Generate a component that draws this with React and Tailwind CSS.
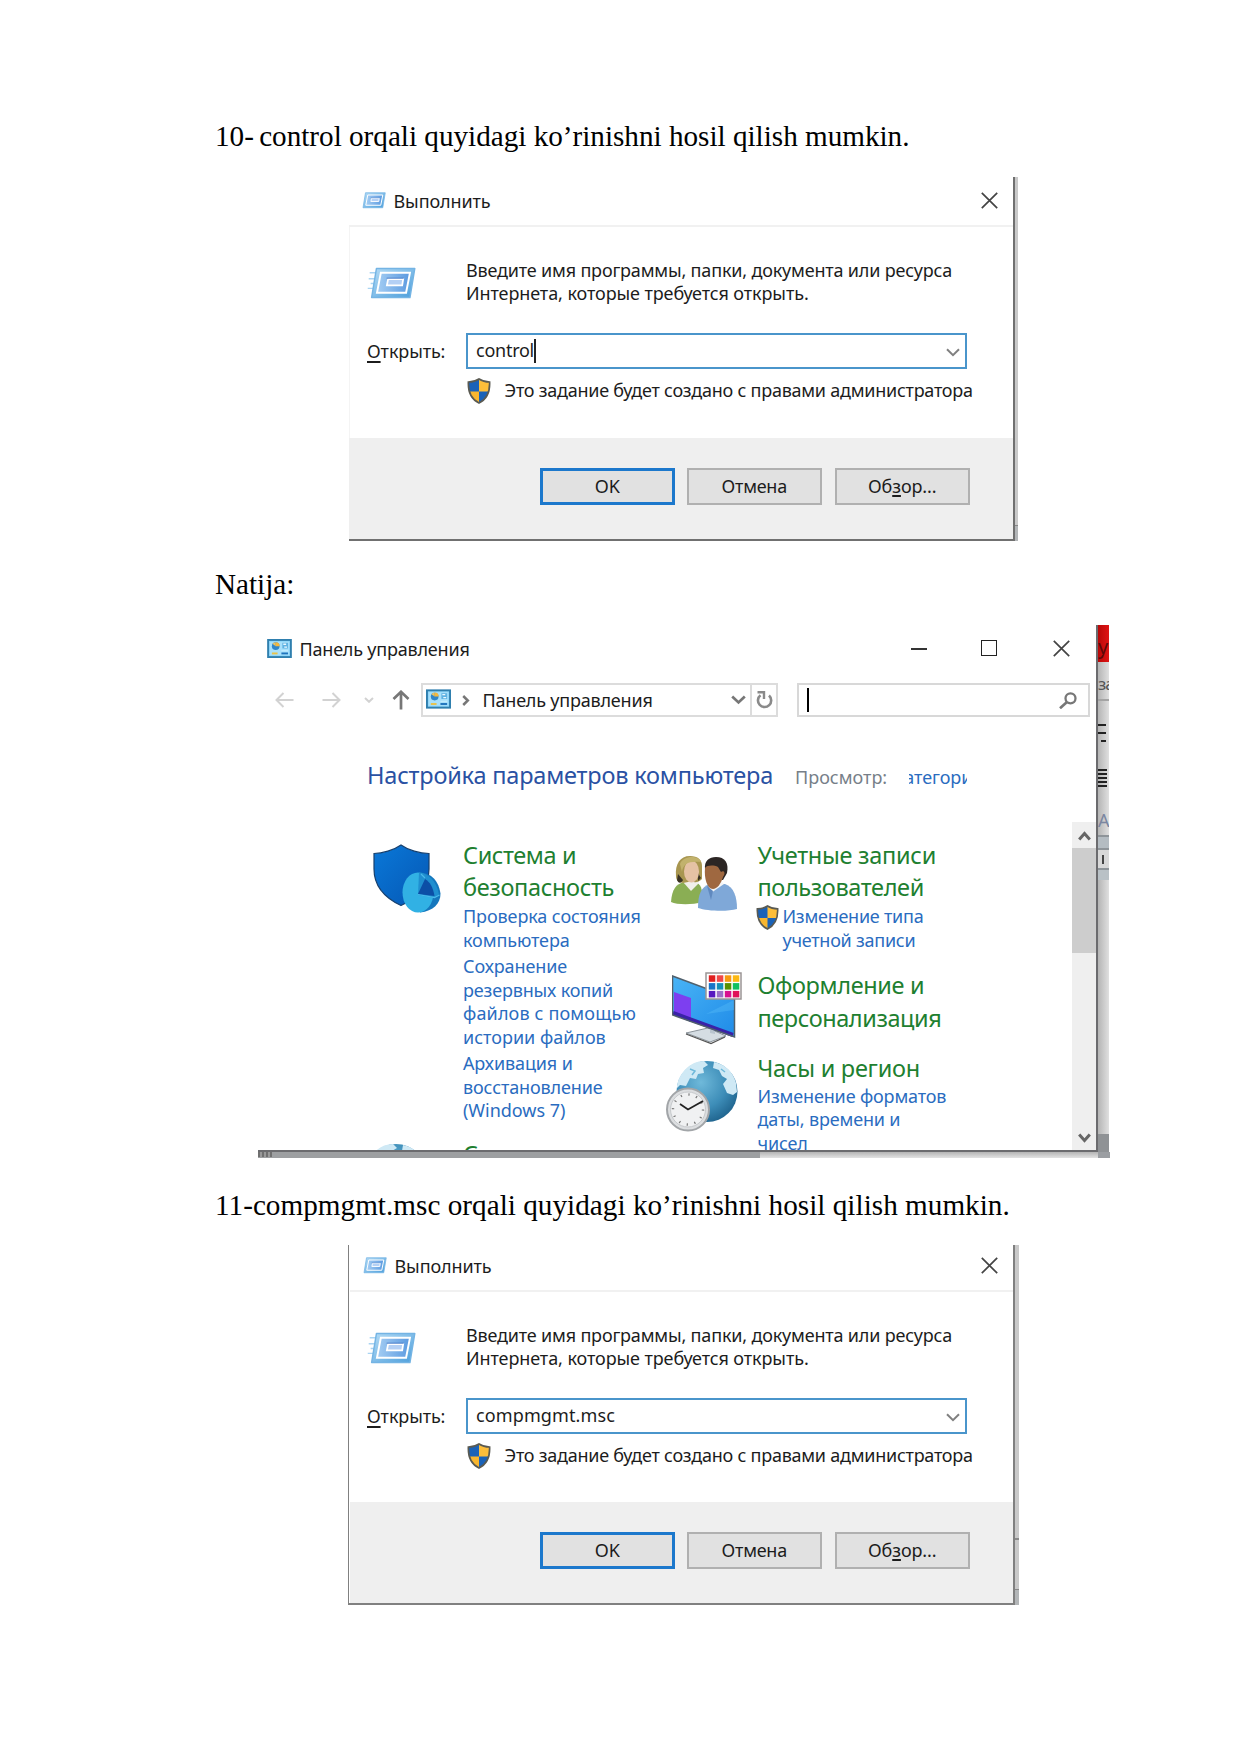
const serif = "h-[34px] pl-[215px] font-['Liberation_Serif',serif] text-[29.17px] leading-[34px] whitespace-pre text-black";

function UacShield({ className }) {
  return (
    <svg viewBox="0 0 24 26" className={className}>
      <path d="M12 1C9 3 5 4 1.4 4 1 13 3.500 21 12 25 20.500 21 23 13 22.600 4 19 4 15 3 12 1Z" fill="#1a62b8" />
      <path d="M12 1c3 2 7 3 10.600 3 .2 3.500 0 6.500-1 9.500H12Z" fill="#fdbe3a" />
      <path d="M2.300 13.500H12V25C6.500 22.500 3.500 18.500 2.300 13.500Z" fill="#f8b62f" />
      <path d="M12 1C9 3 5 4 1.400 4 1 13 3.500 21 12 25 20.500 21 23 13 22.600 4 19 4 15 3 12 1Z" fill="none" stroke="#5a5a52" strokeWidth="1.700" />
    </svg>
  );
}

function RunIcon({ className, lines }) {
  return (
    <svg viewBox="0 0 50 34" className={className}>
      <defs>
        <linearGradient id="run" x1="0" y1="0" x2="1" y2="1">
          <stop offset="0" stopColor="#b4dcf6" />
          <stop offset="1" stopColor="#4c9edb" />
        </linearGradient>
        <linearGradient id="runin" x1="0" y1="0" x2="1" y2="0">
          <stop offset="0" stopColor="#a4cdf3" />
          <stop offset="1" stopColor="#5b9ae0" />
        </linearGradient>
      </defs>
      {lines && (
        <path d="M2 6h8M1 12h7M3 17h5M0 22h6" stroke="#a9d4f2" strokeWidth="1.500" fill="none" />
      )}
      <path d="M9 1.500h39.500L43.500 31.500H4Z" fill="url(#run)" stroke="#74b4e4" strokeWidth="1.500" strokeLinejoin="round" />
      <path d="M13.500 6h30L39.500 26.500H9.500Z" fill="url(#runin)" stroke="#fff" strokeWidth="2" />
      <path d="M21 12.500h15.500l-1 6.500H19.700Z" fill="#b4d0f5" stroke="#fff" strokeWidth="1.800" />
      <path d="M19.500 11.500h17.500" stroke="#4a7cc8" strokeWidth="1" />
    </svg>
  );
}

function CloseGlyph({ className }) {
  return (
    <svg viewBox="0 0 17 17" className={className}>
      <path d="M.8.8l15.400 15.400M16.200.8L.8 16.200" stroke="#444" strokeWidth="1.700" fill="none" />
    </svg>
  );
}

function RunDialog({ value, caret, second }) {
  return (
    <div className={second ? "ml-[348px] flex h-[360px] w-[671px]" : "ml-[349px] flex h-[364px] w-[669px]"}>
      <div
        className={
          second
            ? "flex w-[667px] flex-col border-r-2 border-b-2 border-l border-[#808080] pl-px"
            : "flex w-[666px] flex-col border-r-2 border-b-2 border-[#707070]"
        }
      >
        <div
          className={
            second
              ? "flex h-[47px] shrink-0 items-start border-b-2 border-[#f1f1f1] pt-[9px] pl-[12px]"
              : "flex h-[50px] shrink-0 items-start border-b-2 border-[#f1f1f1] pt-[12px] pl-[12px]"
          }
        >
          <RunIcon className="mt-[2.500px] h-[17px] w-[25px]" />
          <span className="ml-[7.500px] leading-6 tracking-[-0.1px]">Выполнить</span>
          <CloseGlyph className="mt-[2.500px] mr-[15px] ml-auto size-[17px]" />
        </div>
        <div className={second ? "h-[210px] shrink-0" : "h-[211px] shrink-0 border-l border-[#f4f4f4]"}>
          <div className="flex pt-[31.500px]">
            <div className="w-[116px] pl-[17px]">
              <RunIcon lines className="mt-[8px] h-[33px] w-[50px]" />
            </div>
            <div className="leading-[23.600px] whitespace-nowrap">
              <div className="tracking-[-0.18px]">Введите имя программы, папки, документа или ресурса</div>
              <div className="tracking-[-0.09px]">Интернета, которые требуется открыть.</div>
            </div>
          </div>
          <div className="mt-[27.500px] flex">
            <div className="w-[116px] pt-[6px] pl-[17px] leading-6 tracking-[-0.1px]">
              <span className="underline decoration-[1.500px] underline-offset-[3px]">О</span>ткрыть:
            </div>
            <div className="flex h-[36px] w-[501px] border-2 border-[#4a95cb] pt-[2.500px] pl-[8px] leading-6">
              <span className={second ? "tracking-[0.12px]" : "tracking-[-0.25px]"}>{value}</span>
              {caret && <span className="mt-px h-[24px] w-[2px] bg-[#222]" />}
              <svg viewBox="0 0 14 9" className="mt-[10.500px] mr-[5.500px] ml-auto h-[9px] w-[14px]">
                <path d="M1 1.200l6 6 6-6" fill="none" stroke="#808080" strokeWidth="2" />
              </svg>
            </div>
          </div>
          <div className="mt-[9px] flex pl-[116.500px] leading-6 whitespace-nowrap">
            <UacShield className="mt-[-0.500px] h-[26px] w-[24px]" />
            <span className="ml-[14px] tracking-[-0.25px]">Это задание будет создано с правами администратора</span>
          </div>
        </div>
        <div className="flex min-h-0 grow justify-end bg-[#efefef] pt-[30px] pr-[43.500px] text-[18px]">
          <button className="h-[37px] w-[134.500px] border-3 border-[#1c78cc] bg-[#e1e1e1]">OK</button>
          <button className="ml-[12.500px] h-[37px] w-[134.500px] border-2 border-[#b0b0b0] bg-[#e1e1e1] tracking-[-0.25px]">Отмена</button>
          <button className="ml-[13.500px] h-[37px] w-[134.500px] border-2 border-[#b0b0b0] bg-[#e1e1e1] tracking-[-0.1px]">
            Об<span className="underline decoration-[1.500px] underline-offset-[2px]">з</span>ор...
          </button>
        </div>
      </div>
      <div className="flex grow flex-col bg-[#c9c9c9]">
        <div className={second ? "mt-[293px] h-[2px] bg-[#8a8a8a]" : "hidden"} />
        <div className="mt-auto h-[16px] border-t border-[#888] bg-[#b3b6b8]" />
      </div>
    </div>
  );
}

function PanelIcon({ className }) {
  return (
    <svg viewBox="0 0 26 20" className={className}>
      <rect x="1" y="1" width="24" height="18" fill="#8fd6fa" stroke="#2f7fae" strokeWidth="2" />
      <rect x="3" y="3" width="20" height="14" fill="#a8e0fb" />
      <circle cx="9" cy="7.500" r="4" fill="#2f86c9" />
      <path d="M9 7.500V3.300a4.200 4.200 0 0 1 4.200 4.200Z" fill="#f5b73a" />
      <path d="M9 7.500L5.600 5A4.200 4.200 0 0 1 9 3.300Z" fill="#f0c35a" />
      <rect x="16" y="4" width="6" height="6" fill="#5fb2e2" />
      <path d="M17 5.500h3M18 8.500h3" stroke="#eaf8ff" strokeWidth="1.400" />
      <path d="M5 15.200h6" stroke="#e8c24a" strokeWidth="2" />
      <path d="M15 15.200h7" stroke="#1f74bd" strokeWidth="2" />
      <path d="M15 12.400h7" stroke="#c9efff" strokeWidth="1" />
    </svg>
  );
}

function SecurityIcon() {
  return (
    <svg viewBox="0 0 68 70" className="mt-[22px] ml-[5px] h-[70px] w-[68px]">
      <defs>
        <linearGradient id="sec" x1="0" y1="0" x2="1" y2="1">
          <stop offset="0" stopColor="#0a78d8" />
          <stop offset="1" stopColor="#0557b4" />
        </linearGradient>
      </defs>
      <path d="M28 1C21 6 9 9.500 1 9.500V25C1 42 12 54 28 61.500 44 54 56 42 56 25V9.500C47 9.500 35 6 28 1Z" fill="url(#sec)" stroke="#17406e" strokeWidth="1.200" />
      <path d="M46 28.500c9 0 19 5 21.500 21 0 10-7 17.500-20.500 19Z" fill="#1577bd" />
      <ellipse cx="45" cy="48.500" rx="15.500" ry="20" fill="#31b1e4" />
      <path d="M46 28.500c9 1 17 7 20 22L61 54 45 51Z" fill="#1f8fd0" />
      <path d="M45 50l7-15c5 3 8 8 9.500 17Z" fill="#0c4fa6" />
      <path d="M45 50.500l16.500 3 5-2.500M52 34l-4-4" fill="none" stroke="#49b9ea" strokeWidth="1.200" />
    </svg>
  );
}

function PeopleIcon() {
  return (
    <svg viewBox="0 0 67 55" className="mt-[34px] ml-[8px] h-[55px] w-[67px]">
      <path d="M0 46C1 33 5 28 13 26l13 1c5 2 6 10 5 19C22 49 6 49 0 46Z" fill="#8aae54" />
      <path d="M12 26l8 9 8-8-4-5Z" fill="#f1f0ea" />
      <path d="M5 20C4 8 9 0 19 0c8 0 12 4 12 10v13c-4 4-8 4-9 2L12 27C7 26 5 24 5 20Z" fill="#a89650" />
      <path d="M12 24c-2 4-5 3-6 0l1-6Z" fill="#3a3324" />
      <path d="M27 17l3 5-3 3Z" fill="#3a3324" />
      <ellipse cx="20.500" cy="15.500" rx="7.500" ry="11" fill="#e5c2a4" />
      <path d="M11 16c1-8 6-11 19-10C28-1 12-1 9 8Z" fill="#c2b26c" />
      <path d="M27 52c0-14 3-21 12-24h15c9 3 12 13 12 25-10 3-30 2-39-1Z" fill="#7fa8d8" />
      <path d="M37 28l3 9 13-9-5-5Z" fill="#f4f5f6" />
      <path d="M36 30l4 14 2-9Z" fill="#6089bf" />
      <path d="M34 13C33 5 38 1 45 1c9 0 13 6 11 16l-4 7H36Z" fill="#2c2624" />
      <path d="M34 12c2-3 9-3 13-1l3 5c3-2 5 1 2 5-2 7-6 12-10 12-6 0-9-11-8-21Z" fill="#9f6840" />
    </svg>
  );
}

const swatches = [
  ["#e02020", "#f04848", "#f79a10", "#fcb813"],
  ["#1874c8", "#1690b8", "#589000", "#10c060"],
  ["#5818c0", "#9c70c8", "#d81090", "#e01058"],
];

function MonitorIcon() {
  return (
    <svg viewBox="0 0 70 73" className="ml-[9px] h-[73px] w-[70px]">
      <defs>
        <linearGradient id="scr" x1="0" y1="0" x2="1" y2="1">
          <stop offset="0" stopColor="#49b4f6" />
          <stop offset="1" stopColor="#1f8be8" />
        </linearGradient>
      </defs>
      <path d="M14 61l22-5 18 8-16 6Z" fill="#d5dde3" stroke="#8b949b" strokeWidth="1" />
      <path d="M14 62l25 9.500 14-6.500" fill="none" stroke="#555" strokeWidth="1.300" />
      <path d="M38 50h5v12l-5-1Z" fill="#b9c5cf" />
      <path d="M.5 4l62 23v38L.500 42.500Z" fill="url(#scr)" />
      <path d="M2 20l17 6v24L2 43Z" fill="#7d3ff0" />
      <path d="M1 41l60 22" stroke="#3a22a8" strokeWidth="4" />
      <path d="M.5 4l62 23v38L.500 43Z" fill="none" stroke="#51606c" strokeWidth="1.500" />
      <path d="M34 42L62 28v10Z" fill="#5cc0fa" opacity=".35" />
      <rect x="34" y="1" width="35" height="26" fill="#fff" stroke="#9b9595" strokeWidth="1.500" />
      {swatches.map((row, r) =>
        row.map((c, i) => <rect key={c} x={36.800 + i * 8} y={3.300 + r * 7.800} width="6.500" height="6.500" fill={c} />)
      )}
    </svg>
  );
}

function Globe({ id }) {
  return (
    <>
      <defs>
        <radialGradient id={id} cx="0.400" cy="0.350" r="0.700">
          <stop offset="0" stopColor="#6fb9da" />
          <stop offset="0.600" stopColor="#3d8db8" />
          <stop offset="1" stopColor="#1e628c" />
        </radialGradient>
      </defs>
      <circle cx="41" cy="31.500" r="30.500" fill={`url(#${id})`} />
      <path d="M11 26C13 13 24 1 38 1l4 4-5 3 1 5-6 1-2 5-6-1-4 8-6-1-3 3ZM48 2c10 2 19 9 22 21l1 9-4 3-6-2-4-9 4-5-5-3-3-6-6-2Z" fill="#cfe9f5" />
      <path d="M24 9l5 2-3 4M55 9l4 3" fill="none" stroke="#6fb9da" strokeWidth="1.500" />
    </>
  );
}

function ClockIcon() {
  return (
    <svg viewBox="0 0 72 73" className="ml-[3px] h-[73px] w-[72px]">
      <Globe id="globe" />
      <circle cx="22" cy="49.500" r="21" fill="#dcdee0" stroke="#a2a5a8" strokeWidth="2" />
      <circle cx="22" cy="49.500" r="17.500" fill="#f0f1f2" stroke="#c6c9cc" strokeWidth="1" />
      <circle cx="22" cy="49.500" r="15" fill="none" stroke="#777" strokeWidth="2.400" strokeDasharray="1.200 6.654" />
      <path d="M14 44l8 5.500L37 41" fill="none" stroke="#222" strokeWidth="1.800" />
    </svg>
  );
}

const catTitle = "text-[23.500px] leading-[32.800px] text-[#1e8030]";
const link = "leading-[23.600px] text-[#2a6cc0]";

function ControlPanel() {
  return (
    <div className="ml-[258px] h-[533px] w-[851px]">
      <div className="flex h-[527px]">
        <div className="flex w-[841px] flex-col border-r-2 border-b-2 border-[#6b6b6e]">
          <div className="flex h-[36px] items-start pt-[12px] pl-[9px]">
            <PanelIcon className="mt-[2px] h-[19px] w-[25px]" />
            <span className="ml-[7.500px] leading-6 tracking-[-0.2px]">Панель управления</span>
            <span className="mt-[11px] ml-auto h-[2px] w-[16px] bg-[#333]" />
            <span className="mt-[3px] ml-[54px] size-[16px] border-[1.500px] border-[#222]" />
            <CloseGlyph className="mt-[2.500px] mr-[26.500px] ml-[55.500px] size-[17px]" />
          </div>
          <div className="mt-[22px] flex h-[34px] shrink-0 items-center pl-[17px]">
            <svg viewBox="0 0 19 16" className="h-[16px] w-[19px]">
              <path d="M8.500 1L1.500 8l7 7M1.500 8H18.500" fill="none" stroke="#d2d2d2" strokeWidth="2" />
            </svg>
            <svg viewBox="0 0 19 16" className="ml-[27.500px] h-[16px] w-[19px]">
              <path d="M10.500 1l7 7-7 7M17.500 8H.5" fill="none" stroke="#d2d2d2" strokeWidth="2" />
            </svg>
            <svg viewBox="0 0 10 6" className="ml-[23px] h-[6px] w-[10px]">
              <path d="M1 1l4 3.800L9 1" fill="none" stroke="#d2d2d2" strokeWidth="2" />
            </svg>
            <svg viewBox="0 0 18 20" className="ml-[18px] h-[20px] w-[18px]">
              <path d="M1.500 9L9 1.800 16.500 9M9 2v17.500" fill="none" stroke="#777" strokeWidth="2.700" />
            </svg>
            <div className="ml-[11.500px] flex h-[34px] w-[356.500px] items-center border-2 border-[#dcdcdc] pl-[3px]">
              <PanelIcon className="-mt-[3px] h-[20px] w-[25px]" />
              <svg viewBox="0 0 8 11" className="ml-[10.500px] h-[11px] w-[8px]">
                <path d="M1.200 1l4.600 4.500-4.600 4.500" fill="none" stroke="#777" strokeWidth="2.500" />
              </svg>
              <span className="ml-[13px] leading-6 tracking-[-0.2px]">Панель управления</span>
              <svg viewBox="0 0 15 10" className="mr-[4px] ml-auto h-[10px] w-[15px]">
                <path d="M1.200 1.500l6.300 6 6.300-6" fill="none" stroke="#777" strokeWidth="2.700" />
              </svg>
              <div className="flex h-full w-[26px] items-center justify-center border-l-2 border-[#dcdcdc]">
                <svg viewBox="0 0 17 18" className="ml-[2px] h-[18px] w-[17px]">
                  <path d="M13 4.500A6.600 6.600 0 1 1 4.500 4.200" fill="none" stroke="#8a8a8a" strokeWidth="2.600" />
                  <path d="M1.500 1.300h6.500V8" fill="none" stroke="#8a8a8a" strokeWidth="2.400" />
                </svg>
              </div>
            </div>
            <div className="ml-[19.500px] flex h-[34px] w-[293px] items-center border-2 border-[#d8d8d8] pl-[7.500px]">
              <span className="h-[24px] w-[2px] bg-black" />
              <svg viewBox="0 0 18 17" className="mr-[11.500px] ml-auto h-[17px] w-[18px]">
                <circle cx="11.500" cy="6.300" r="5" fill="none" stroke="#777" strokeWidth="2.300" />
                <path d="M8 10L1 16.300" stroke="#777" strokeWidth="2.600" />
              </svg>
            </div>
          </div>
          <div className="mt-[42px] flex h-[33px] shrink-0 pl-[109px] leading-[33px] whitespace-nowrap">
            <span className="w-[428px] text-[23.500px] tracking-[-0.18px] text-[#2a51a3]">Настройка параметров компьютера</span>
            <span className="mt-[1.500px] w-[114px] text-[#777f89]">Просмотр:</span>
            <div className="mt-[1.500px] flex w-[58px] justify-center overflow-hidden text-[#2a6cc0]">
              <span className="tracking-[-0.05px]">Категория</span>
            </div>
          </div>
          <div className="mt-[29.500px] flex min-h-0 grow">
            <div className="flex w-[814px] overflow-hidden pl-[110px] whitespace-nowrap">
              <div className="w-[95px] shrink-0">
                <SecurityIcon />
                <svg viewBox="0 0 72 40" className="mt-[229px] ml-[-13px] h-[40px] w-[72px]">
                  <Globe id="globe2" />
                </svg>
              </div>
              <div className="w-[200px] shrink-0 pt-[17px]">
                <div className={catTitle}>
                  <div className="tracking-[-0.4px]">Система и</div>
                  <div className="tracking-[-0.33px]">безопасность</div>
                </div>
                <div className={`${link} mt-px tracking-[-0.1px]`}>
                  <div>Проверка состояния</div>
                  <div>компьютера</div>
                </div>
                <div className={`${link} mt-[2.800px]`}>
                  <div className="tracking-[-0.1px]">Сохранение</div>
                  <div className="tracking-[-0.16px]">резервных копий</div>
                  <div className="tracking-[0.15px]">файлов с помощью</div>
                  <div>истории файлов</div>
                </div>
                <div className={`${link} mt-[2.800px] tracking-[-0.12px]`}>
                  <div>Архивация и</div>
                  <div>восстановление</div>
                  <div className="tracking-[-0.03px]">(Windows 7)</div>
                </div>
                <div className={`${catTitle} mt-[14.500px]`}>Сеть и</div>
              </div>
              <div className="w-[94.500px] shrink-0">
                <PeopleIcon />
                <div className="h-[61px]" />
                <MonitorIcon />
                <div className="h-[15px]" />
                <ClockIcon />
              </div>
              <div className="shrink-0 pt-[17px]">
                <div className={catTitle}>
                  <div className="tracking-[-0.28px]">Учетные записи</div>
                  <div className="tracking-[-0.38px]">пользователей</div>
                </div>
                <div className={`${link} mt-px flex`}>
                  <UacShield className="ml-[-2px] h-[25px] w-[23px]" />
                  <div className="ml-[4px] tracking-[-0.25px]">
                    <div>Изменение типа</div>
                    <div>учетной записи</div>
                  </div>
                </div>
                <div className={`${catTitle} mt-[16.500px]`}>
                  <div className="tracking-[-0.35px]">Оформление и</div>
                  <div className="tracking-[-0.42px]">персонализация</div>
                </div>
                <div className={`${catTitle} mt-[17.500px] tracking-[-0.25px]`}>Часы и регион</div>
                <div className={`${link} tracking-[-0.15px]`}>
                  <div>Изменение форматов</div>
                  <div>даты, времени и</div>
                  <div>чисел</div>
                </div>
              </div>
            </div>
            <div className="flex w-[24px] flex-col items-center bg-[#efefef]">
              <svg viewBox="0 0 13 10" className="mt-[9px] h-[10px] w-[13px]">
                <path d="M1.200 8.500l5.300-6 5.300 6" fill="none" stroke="#666" strokeWidth="3" />
              </svg>
              <div className="mt-[7px] h-[105px] w-full bg-[#cdcdcd]" />
              <svg viewBox="0 0 13 10" className="mt-auto mb-[7px] h-[10px] w-[13px]">
                <path d="M1.200 1.500l5.300 6 5.300-6" fill="none" stroke="#666" strokeWidth="3" />
              </svg>
            </div>
          </div>
        </div>
        <div className="flex w-[11px] shrink-0 flex-col overflow-hidden bg-gradient-to-r from-[#b5b5b5] to-[#e0e0e0] leading-none">
          <div className="h-[37px] shrink-0 bg-gradient-to-r from-[#b80808] to-[#e01414] pt-[12px] text-[20px] text-[#5c0808]">у</div>
          <div className="h-[39px] shrink-0 border-b-2 border-[#a4a4a4] pt-[13px] text-[17px] tracking-[-1px] text-[#555]">
            за
          </div>
          <div className="mt-[23px] h-[2px] w-[8px] shrink-0 bg-[#222]" />
          <div className="mt-[6px] h-[2px] w-[8px] shrink-0 bg-[#222]" />
          <div className="mt-[6px] ml-[3px] h-[2px] w-[5px] shrink-0 bg-[#222]" />
          <div className="mt-[27px] h-[2px] w-[9px] shrink-0 bg-[#222]" />
          <div className="mt-[2px] h-[2px] w-[9px] shrink-0 bg-[#222]" />
          <div className="mt-[2px] h-[2px] w-[9px] shrink-0 bg-[#222]" />
          <div className="mt-[2px] h-[2px] w-[9px] shrink-0 bg-[#222]" />
          <div className="mt-[2px] h-[2px] w-[9px] shrink-0 bg-[#222]" />
          <div className="mt-[24px] h-[24px] shrink-0 text-[18px] whitespace-nowrap text-[#7b86a0]">А.</div>
          <div className="h-[15px] shrink-0 border-y-2 border-[#8e9499] bg-[#b4bcc2]" />
          <div className="flex h-[18px] shrink-0 items-center bg-[#d8d8d8] pl-[4px]">
            <span className="h-[9px] w-[2px] bg-[#444]" />
          </div>
          <div className="h-[12px] shrink-0 border-t-2 border-[#8e9499] bg-[#b9c1c6]" />
          <div className="mt-auto h-[18px] shrink-0 bg-[#8f9295]" />
        </div>
      </div>
      <div className="flex h-[6px] w-[852px]">
        <div className="flex w-[502px] bg-[#9d9fa1]">
          <span className="h-[5px] w-[14px] bg-[repeating-linear-gradient(90deg,#707070_0_2px,#999_2px_4px)]" />
        </div>
        <div className="grow bg-gradient-to-b from-[#b4b4b4] to-[#e2e2e2]" />
        <div className="w-[12px] bg-[#9b9ea2]" />
      </div>
    </div>
  );
}

export default function App() {
  return (
    <main className="h-[1755px] w-[1241px] overflow-hidden bg-white pt-[119px] font-['Noto_Sans','Open_Sans',sans-serif] text-[18px] text-[#1c1c1c]">
      <p className={serif}>
        10-<span className="tracking-[-2px]"> </span>control orqali quyidagi ko’rinishni hosil qilish mumkin.
      </p>
      <div className="mt-[24px]">
        <RunDialog value="control" caret />
      </div>
      <p className={`${serif} mt-[26px]`}>Natija:</p>
      <div className="mt-[24px]">
        <ControlPanel />
      </div>
      <p className={`${serif} mt-[29.500px] tracking-[0.035px]`}>11-compmgmt.msc orqali quyidagi ko’rinishni hosil qilish mumkin.</p>
      <div className="mt-[23.500px]">
        <RunDialog value="compmgmt.msc" second />
      </div>
    </main>
  );
}
